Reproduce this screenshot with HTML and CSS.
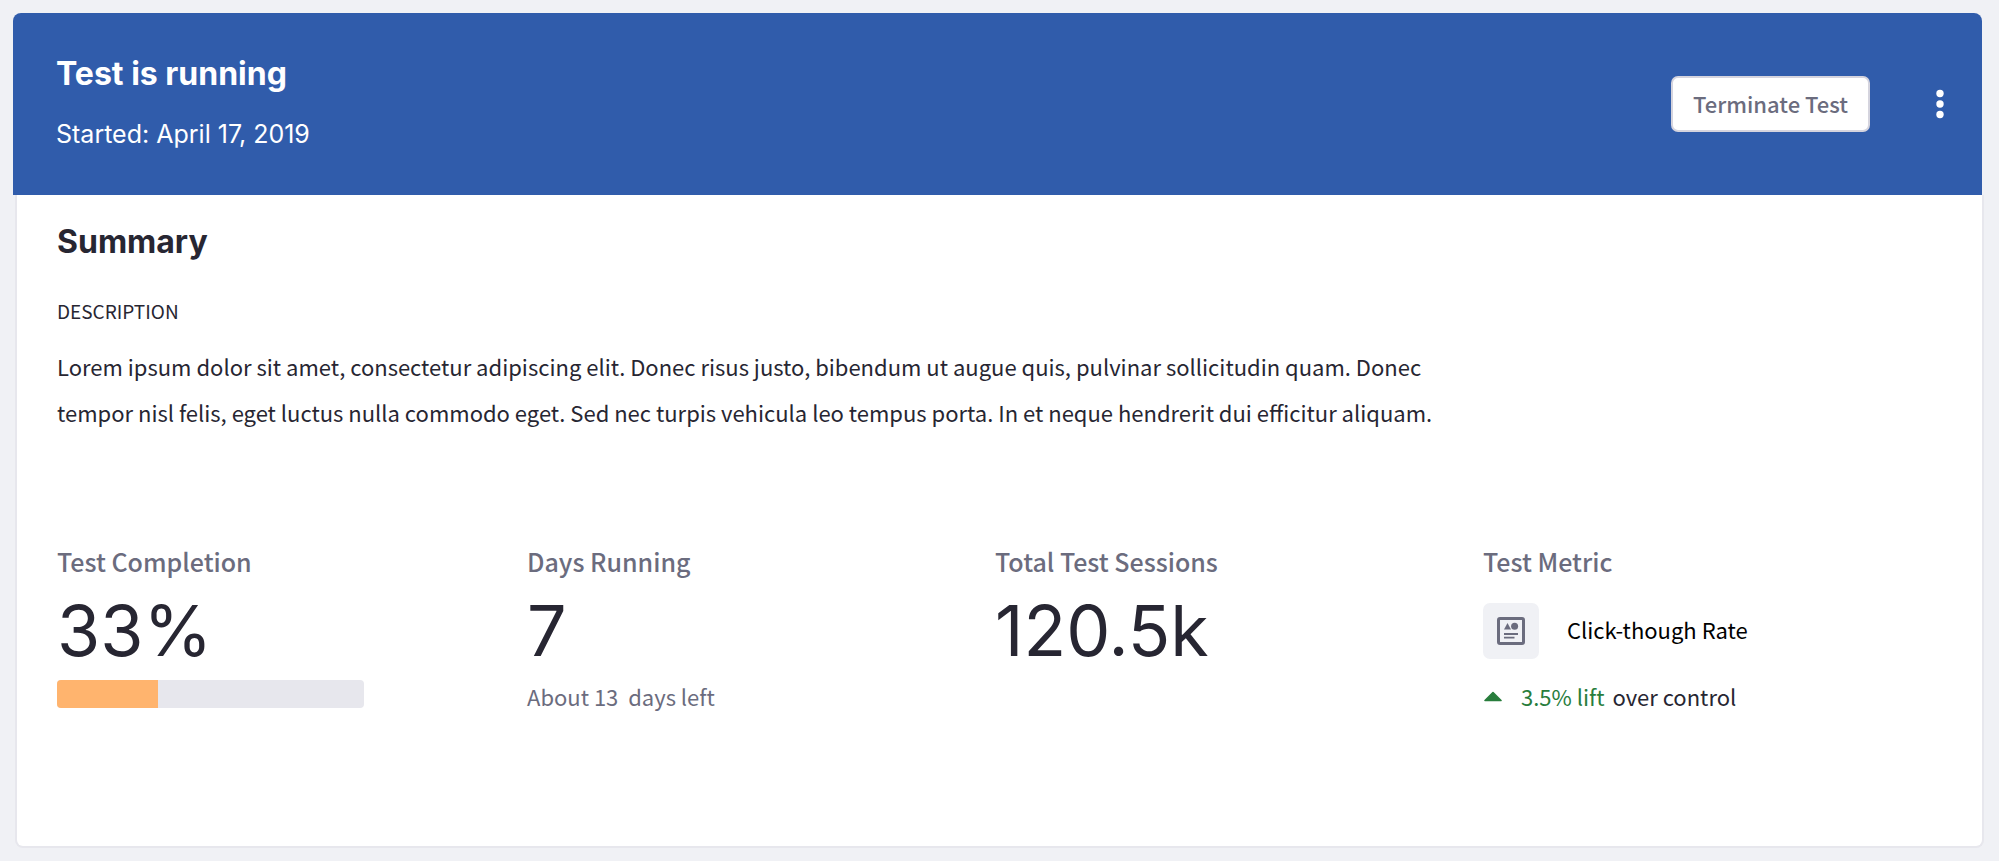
FILE: index.html
```
<!DOCTYPE html>
<html lang="en">
<head>
<meta charset="utf-8">
<meta name="viewport" content="width=device-width, initial-scale=1">
<title>Test is running</title>
<link rel="stylesheet" href="styles.css">
</head>
<body>
<main class="panel">
  <header class="panel-header">
    <div>
      <h1 class="panel-title">Test is running</h1>
      <p class="panel-date">Started: April 17, 2019</p>
    </div>
    <div class="panel-actions">
      <button class="button" type="button">Terminate Test</button>
      <button class="menu-button" type="button" aria-label="More actions">
        <svg class="menu-icon" viewBox="0 0 8 30" aria-hidden="true"><circle cx="4" cy="4.500" r="3.700"/><circle cx="4" cy="15" r="3.700"/><circle cx="4" cy="25.500" r="3.700"/></svg>
      </button>
    </div>
  </header>
  <section class="summary">
    <h2 class="summary-title">Summary</h2>
    <h3 class="summary-label">DESCRIPTION</h3>
    <p class="summary-text">Lorem ipsum dolor sit amet, consectetur adipiscing elit. Donec risus justo, bibendum ut augue quis, pulvinar sollicitudin quam. Donec tempor nisl felis, eget luctus nulla commodo eget. Sed nec turpis vehicula leo tempus porta. In et neque hendrerit dui efficitur aliquam.</p>
    <div class="stats">
      <div class="stat">
        <h3 class="stat-label">Test Completion</h3>
        <p class="stat-value">33%</p>
        <div class="progress" role="progressbar" aria-label="Test Completion" aria-valuenow="33" aria-valuemin="0" aria-valuemax="100"><div class="progress-fill" style="width: 33%"></div></div>
      </div>
      <div class="stat">
        <h3 class="stat-label">Days Running</h3>
        <p class="stat-value">7</p>
        <p class="stat-note">About 13&nbsp; days left</p>
      </div>
      <div class="stat">
        <h3 class="stat-label">Total Test Sessions</h3>
        <p class="stat-value">120.5k</p>
      </div>
      <div class="stat">
        <h3 class="stat-label">Test Metric</h3>
        <div class="metric">
          <span class="metric-badge">
            <svg class="metric-icon" viewBox="0 0 28 28" aria-hidden="true"><rect x="1.500" y="1.500" width="25" height="25" rx="1.500" fill="none" stroke="currentColor" stroke-width="3"/><path d="M7 12.500 10.500 6l3.500 6.500z" fill="currentColor"/><circle cx="17.600" cy="9.200" r="3.500" fill="currentColor"/><path d="M7 17h14M7 20.600h10.500" stroke="currentColor" stroke-width="1.800" fill="none"/></svg>
          </span>
          <span class="metric-name">Click-though Rate</span>
        </div>
        <p class="lift">
          <svg class="lift-icon" viewBox="0 0 18 11" aria-hidden="true"><path d="M1 9.500 9 1.500l8 8z" fill="currentColor" stroke="currentColor" stroke-width="1.600" stroke-linejoin="round"/></svg>
          <span class="lift-text"><span class="lift-value">3.5% lift</span> over control</span>
        </p>
      </div>
    </div>
  </section>
</main>
</body>
</html>
```
FILE: styles.css
```
* {
  box-sizing: border-box;
}

body {
  margin: 0;
  padding: 13px 17px 13px 13px;
  background: #f0f1f5;
  color: #272632;
  font-family: "Noto Sans CJK SC", "Noto Sans", sans-serif;
  font-size: 22px;
}

h1, h2, h3, p {
  margin: 0;
}

.panel-header {
  display: flex;
  align-items: center;
  justify-content: space-between;
  padding: 40px 30px 41px 43px;
  border-radius: 8px 8px 0 0;
  background: #305cab;
  color: #fff;
}

.panel-title,
.summary-title {
  font: 700 32px/42px Inter, sans-serif;
}

.panel-date {
  margin-top: 19px;
  font: 400 25px/40px Inter, sans-serif;
}

.panel-actions {
  display: flex;
  align-items: center;
  gap: 58px;
}

.button {
  height: 56px;
  padding: 0 20px 2px;
  border: 2px solid #d5d4de;
  border-radius: 7px;
  background: #fff;
  color: #6b6c7e;
  font: 500 22px/30px "Noto Sans CJK SC", "Noto Sans", sans-serif;
}

.menu-button {
  display: flex;
  padding: 8px;
  border: 0;
  background: none;
  color: inherit;
}

.menu-icon {
  width: 8px;
  height: 30px;
  fill: currentColor;
}

.summary {
  margin: 0 -2px 0 2px;
  padding: 26px 28px 134px 40px;
  border: 2px solid #e7e7ed;
  border-top: 0;
  border-radius: 0 0 8px 8px;
  background: #fff;
}

.summary-label {
  margin-top: 32px;
  font-size: 19px;
  font-weight: 400;
  line-height: 32px;
}

.summary-text {
  max-width: 1400px;
  margin-top: 16px;
  line-height: 46px;
}

.stats {
  display: grid;
  grid-template-columns: 470fr 468fr 488fr 471fr;
  margin-top: 108px;
}

.stat-label {
  color: #6b6c7e;
  font-size: 25px;
  font-weight: 500;
  line-height: 36px;
}

.stat-value {
  margin-top: 22px;
  font: 400 70px/60px Inter, sans-serif;
}

.progress {
  width: 307px;
  height: 28px;
  margin-top: 19px;
  overflow: hidden;
  border-radius: 4px;
  background: #e7e7ed;
}

.progress-fill {
  height: 100%;
  background: #ffb46e;
}

.stat-note {
  margin-top: 19px;
  color: #6b6c7e;
  line-height: 32px;
}

.metric {
  display: flex;
  align-items: center;
  gap: 28px;
  margin-top: 24px;
  color: #000;
}

.metric-badge {
  display: grid;
  place-items: center;
  width: 56px;
  height: 56px;
  border-radius: 7px;
  background: #f0f1f5;
  color: #6b6c7e;
}

.metric-name {
  padding-bottom: 4px;
}

.metric-icon {
  width: 28px;
  height: 28px;
}

.lift {
  display: flex;
  align-items: center;
  gap: 19px;
  margin-top: 21px;
  line-height: 32px;
}

.lift-icon {
  width: 18px;
  height: 11px;
  margin-left: 1px;
  color: #287d3c;
}

.lift-value {
  margin-right: 3px;
  color: #287d3c;
}
```
